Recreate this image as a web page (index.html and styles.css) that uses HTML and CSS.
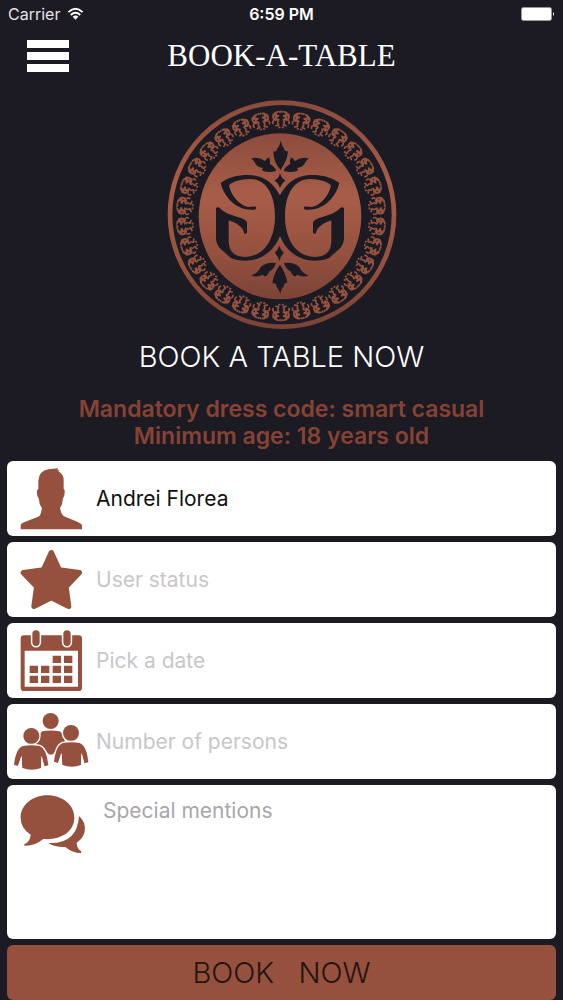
FILE: index.html
```
<!DOCTYPE html>
<html lang="en">
<head>
    <meta charset="UTF-8">
    <meta name="viewport" content="width=device-width, initial-scale=1">
    <title>Book-A-Table</title>
    <link rel="stylesheet" href="styles.css">
</head>
<body>
    <!-- Status bar -->
    <div class="status-bar">
        <div class="carrier">
            <span>Carrier</span>
            <svg class="wifi" viewBox="0 0 18 14" aria-hidden="true">
                <path d="M1.5 5 Q9 -2 16.5 5" fill="none" stroke="#fff" stroke-width="2"/>
                <path d="M4 8 Q9 3.4 14 8" fill="none" stroke="#fff" stroke-width="2"/>
                <path d="M6 10 Q9 7.4 12 10 L9 13Z" fill="#fff"/>
            </svg>
        </div>
        <div class="clock">6:59 PM</div>
        <div class="battery">
            <svg viewBox="0 0 34 14" aria-hidden="true">
                <rect x="0.5" y="0.5" width="30" height="13" rx="2" fill="#fff" stroke="#99989c"/>
                <path d="M32 5 Q34 7 32 9Z" fill="#fff"/>
            </svg>
        </div>
    </div>

    <header class="nav">
        <button class="menu" type="button" aria-label="Menu">
            <span></span>
            <span></span>
            <span></span>
        </button>
        <h1>BOOK-A-TABLE</h1>
    </header>

    <main>
        <svg class="logo" viewBox="21 15 690 690" role="img" aria-label="GG logo">
            <defs>
                <linearGradient id="copper" x1="0" y1="0" x2="0" y2="1">
                    <stop offset="0" stop-color="#8c4c3d"/>
                    <stop offset="0.38" stop-color="#a85d48"/>
                    <stop offset="0.7" stop-color="#96523f"/>
                    <stop offset="1" stop-color="#7c4337"/>
                </linearGradient>
                <g id="curl">
                    <path d="M5 -24 Q14 -27 20 -20 L25 -17 Q29 -8 24 1 Q17 8 11 3 L6 6 L4 0 Q11 -1 12 -6 Q4 -5 5 -13 Q13 -13 14 -17 Q8 -19 5 -24Z"/>
                    <path d="M6 4 Q12 6 9 12 Q5 16 10 20 M10 17 L17 21 M22 3 Q28 9 22 14 M2 23 L8 25 M3 -20 L3 -26" fill="none" stroke="#96523f" stroke-width="5"/>
                    <circle cx="19" cy="-7" r="2" fill="#1c1b24"/>
                </g>
                <g id="motif">
                    <use href="#curl"/>
                    <use href="#curl" transform="scale(-1 1)"/>
                </g>
                <g id="motifs">
                    <use href="#motif" transform="translate(0 -290)"/>
                    <use href="#motif" transform="rotate(12) translate(0 -290)"/>
                    <use href="#motif" transform="rotate(24) translate(0 -290)"/>
                    <use href="#motif" transform="rotate(36) translate(0 -290)"/>
                    <use href="#motif" transform="rotate(48) translate(0 -290)"/>
                </g>
                <path id="letter" d="M538 264 C515 247 488 240 455 240 C405 240 378 268 360 301 C344 327 344 380 358 417 C374 464 412 497 465 497 Q490 497 507 489 L538 462 Q551 450 552 430 L552 340 Q546 332 537 343 Q522 357 490 365 Q461 373 459 382 L459 415 L467 416 Q470 394 500 381 L514 376 L514 440 Q512 484 468 486 C400 486 375 420 375 365 C375 298 402 252 450 252 C480 252 506 261 513 272 C505 306 480 331 455 336 Q442 333 432 335 Q430 344 438 344 C490 348 527 308 538 264Z"/>
                <path id="leaf" d="M371 227 Q377 213 391 207 Q388 198 393 187 Q400 190 405 198 Q424 185 446 190 Q438 197 433 207 Q426 218 411 219 L415 226 Q396 235 371 227Z"/>
            </defs>

            <circle cx="366" cy="359" r="336" fill="#1c1b24" stroke="url(#copper)" stroke-width="14"/>
            <g fill="#96523f" transform="translate(363 363)">
                <use href="#motifs"/>
                <use href="#motifs" transform="rotate(60)"/>
                <use href="#motifs" transform="rotate(120)"/>
                <use href="#motifs" transform="rotate(180)"/>
                <use href="#motifs" transform="rotate(240)"/>
                <use href="#motifs" transform="rotate(300)"/>
            </g>
            <ellipse cx="360" cy="364" rx="244" ry="249" fill="url(#copper)"/>

            <g fill="#1c1b24">
                <use href="#letter"/>
                <use href="#letter" transform="translate(720 0) scale(-1 1)"/>
                <!-- top flower -->
                <path d="M362 137 Q366 153 373 162 Q373 171 384 168 Q383 188 375 202 Q370 212 362 225 Q350 212 346 201 Q340 188 340 168 Q350 173 351 162 Q359 153 362 137Z"/>
                <use href="#leaf"/>
                <use href="#leaf" transform="translate(720 0) scale(-1 1)"/>
                <path d="M360 235 Q365 251 377 257 Q365 264 360 280 Q356 264 343 257 Q356 251 360 235Z"/>
                <!-- bottom flower -->
                <path d="M358 452 Q363 467 372 474 Q363 480 358 498 Q353 480 344 474 Q353 467 358 452Z"/>
                <path d="M360 509 Q377 533 382 563 Q371 562 372 573 Q364 580 361 596 Q356 582 349 574 Q350 563 337 565 Q341 534 360 509Z"/>
                <path id="low-leaf" d="M372 504 Q400 500 418 516 Q424 533 446 542 Q427 548 412 539 L407 544 Q396 542 393 530 Q378 524 372 504Z"/>
                <use href="#low-leaf" transform="translate(720 0) scale(-1 1)"/>
            </g>
        </svg>

        <h2>BOOK A TABLE NOW</h2>
        <p class="notice">Mandatory dress code: smart casual<br>Minimum age: 18 years old</p>

        <form class="booking">
            <label class="field">
                <svg viewBox="21 15 246 225" role="img" aria-label="Name">
                    <path d="M62 220 L62 206 Q64 201 74 198 L111 184 Q121 180 122 173 L126 157 Q117 145 116 127 Q110 121 111 103 L115 99 L115 74 Q118 44 145 40 L174 37 L172 43 L178 41 L175 46 Q192 55 191 76 L191 99 L194 103 Q195 120 189 127 Q188 144 180 157 L184 171 Q188 181 199 184 L232 197 Q244 202 246 207 L246 220Z"/>
                </svg>
                <input class="name" type="text" name="name" value="Andrei Florea">
            </label>

            <label class="field">
                <svg viewBox="21 261 246 225" role="img" aria-label="User status">
                    <path d="M154 293 L178 345 L238 353 L198 395 L206 454 L154 428 L102 454 L110 395 L70 353 L130 345Z" stroke="#96503e" stroke-width="16" stroke-linejoin="round"/>
                </svg>
                <input type="text" name="status" placeholder="User status">
            </label>

            <label class="field">
                <svg viewBox="21 25 246 225" role="img" aria-label="Date">
                    <path fill-rule="evenodd" d="M72 62 H236 Q246 62 246 72 V219 Q246 229 236 229 H72 Q62 229 62 219 V72 Q62 62 72 62Z M74 108 V216 H234 V108Z"/>
                    <rect x="97" y="47" width="22" height="47" rx="11" stroke="#fff" stroke-width="9" paint-order="stroke"/>
                    <rect x="190" y="47" width="22" height="47" rx="11" stroke="#fff" stroke-width="9" paint-order="stroke"/>
                    <path d="M158 123h25v22h-25z M192 123h25v22h-25z M89 153h25v22h-25z M123 153h25v22h-25z M158 153h25v22h-25z M192 153h25v22h-25z M89 183h25v22h-25z M123 183h25v22h-25z M158 183h25v22h-25z M192 183h25v22h-25z"/>
                </svg>
                <input type="text" name="date" placeholder="Pick a date">
            </label>

            <label class="field">
                <svg viewBox="21 270 246 225" role="img" aria-label="Number of persons">
                    <circle cx="152" cy="321" r="24"/>
                    <path d="M127 352 Q152 347 178 352 Q187 355 191 373 L198 388 L178 402 L160 419 Q152 425 145 419 L128 400 L108 390 L119 367 Q120 356 127 352Z"/>
                    <g stroke="#fff" stroke-width="8" paint-order="stroke">
                        <circle cx="94" cy="366" r="24"/>
                        <circle cx="213" cy="357" r="24"/>
                        <path id="body" d="M69 396 Q94 391 119 396 Q140 404 145 454 L133 457 L125 426 L123 462 Q96 472 67 462 L64 426 L54 456 L42 452 Q48 402 69 396Z"/>
                        <use href="#body" x="120" y="-9"/>
                    </g>
                    <path d="M66 425 L54 456 L65 459Z M124 425 L133 457 L124 459Z M185 416 L175 447 L186 450Z M244 416 L253 448 L244 450Z" fill="#fff"/>
                </svg>
                <input type="text" name="persons" placeholder="Number of persons">
            </label>

            <label class="field mentions">
                <svg viewBox="21 18 246 225" role="img" aria-label="Special mentions">
                    <path d="M237 111 Q259 130 254 158 Q249 178 230 191 Q230 208 244 217 L243 222 Q217 222 196 204 Q164 205 145 192 Q232 196 237 111Z"/>
                    <path d="M142 49 C188 49 223 78 223 116 C223 158 181 184 130 180 Q103 202 73 200 L73 196 Q91 187 92 167 Q62 148 62 116 C62 78 97 49 142 49Z"/>
                </svg>
                <textarea name="mentions" placeholder="Special mentions"></textarea>
            </label>

            <button class="submit" type="submit">BOOK &nbsp; NOW</button>
        </form>
    </main>
</body>
</html>
```
FILE: styles.css
```
* {
    box-sizing: border-box;
}

body {
    margin: 0;
    background: #1c1b23;
    color: #fff;
    font-family: Inter, "Liberation Sans", sans-serif;
}

.status-bar {
    display: grid;
    grid-template-columns: 1fr auto 1fr;
    align-items: center;
    height: 28px;
    padding: 0 8px;
    font-size: 16px;
}

.carrier {
    display: flex;
    align-items: center;
    gap: 7px;
    color: #e4e3e6;
}

.wifi {
    width: 17px;
    height: 14px;
}

.clock {
    font-weight: 600;
}

.battery {
    display: flex;
    justify-content: flex-end;
}

.battery svg {
    width: 34px;
    height: 14px;
}

.nav {
    display: grid;
    grid-template-columns: 1fr auto 1fr;
    align-items: center;
    height: 55px;
    padding: 0 27px;
}

.menu {
    display: flex;
    flex-direction: column;
    gap: 4px;
    width: 42px;
    padding: 0;
    border: none;
    background: none;
    cursor: pointer;
}

.menu span {
    width: 100%;
    height: 8px;
    background: #fff;
}

h1 {
    margin: 0;
    font-family: "Liberation Serif", serif;
    font-size: 31px;
    font-weight: normal;
    line-height: 36px;
}

main {
    padding: 17px 7px 0;
}

.logo {
    display: block;
    width: 230px;
    height: 230px;
    margin: 0 auto;
}

h2 {
    margin: 8px 0 20px;
    font-size: 29px;
    font-weight: 300;
    line-height: 38px;
    text-align: center;
}

.notice {
    margin: 0 0 11px;
    color: #864335;
    font-size: 23px;
    font-weight: 600;
    line-height: 27px;
    text-align: center;
}

.booking {
    display: flex;
    flex-direction: column;
    gap: 6px;
}

.field {
    display: flex;
    align-items: center;
    gap: 7px;
    min-height: 75px;
    background: #fff;
    border-radius: 6px;
}

.field svg {
    flex: none;
    width: 82px;
    height: 75px;
    fill: #96503e;
}

.field input,
.field textarea {
    flex: 1;
    min-width: 0;
    padding: 0;
    border: none;
    outline: none;
    background: none;
    color: #111;
    font-family: inherit;
    font-size: 21px;
    line-height: 28px;
}

.field ::placeholder {
    color: #c9c6cb;
    opacity: 1;
}

.mentions {
    align-items: flex-start;
}

.field textarea {
    height: 154px;
    padding: 12px 7px;
    resize: none;
}

.mentions ::placeholder {
    color: #aaa6ab;
}

.submit {
    height: 55px;
    border: none;
    border-radius: 6px;
    background: #96503e;
    color: #24140f;
    font-family: inherit;
    font-size: 29px;
    font-weight: 300;
    cursor: pointer;
}
```
